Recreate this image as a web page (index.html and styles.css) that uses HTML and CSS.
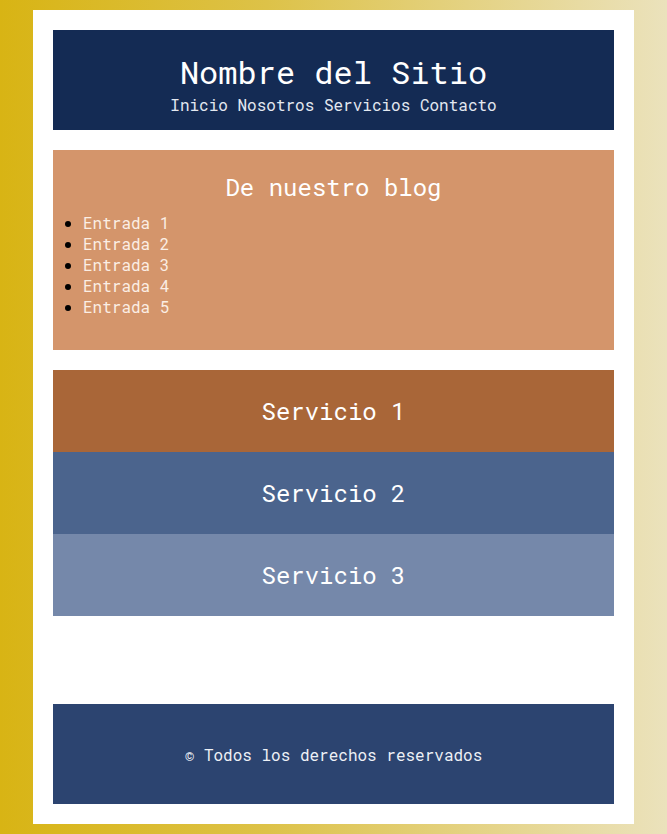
FILE: index.html
```html
<!DOCTYPE html>
<html lang="es">
<head>
<meta charset="utf-8">
<title>Nombre del Sitio</title>
<link rel="stylesheet" href="styles.css">
</head>
<body>
<div class="page">
  <header class="site-header">
    <h1 class="site-title">Nombre del Sitio</h1>
    <nav class="site-nav">
      <a href="#">Inicio</a>
      <a href="#">Nosotros</a>
      <a href="#">Servicios</a>
      <a href="#">Contacto</a>
    </nav>
  </header>
  <section class="blog">
    <h2 class="blog-title">De nuestro blog</h2>
    <ul class="blog-list">
      <li>Entrada 1</li>
      <li>Entrada 2</li>
      <li>Entrada 3</li>
      <li>Entrada 4</li>
      <li>Entrada 5</li>
    </ul>
  </section>
  <section class="services">
    <div class="service service-1">Servicio 1</div>
    <div class="service service-2">Servicio 2</div>
    <div class="service service-3">Servicio 3</div>
  </section>
  <footer class="site-footer">© Todos los derechos reservados</footer>
</div>
</body>
</html>
```
FILE: styles.css
```css
* { box-sizing: border-box; }

html, body {
  margin: 0;
  height: 100%;
}

body {
  background: linear-gradient(to right, #d8b414 0%, #ddc248 40%, #ebe2bc 100%);
  font-family: "Roboto Mono", "DejaVu Sans Mono", "Liberation Mono", monospace;
  padding: 10px 33px;
}

.page {
  background: #ffffff;
  min-height: 814px;
  padding: 20px;
  display: flex;
  flex-direction: column;
  gap: 20px;
}

.site-header {
  background: #142b54;
  height: 100px;
  display: flex;
  flex-direction: column;
  align-items: center;
  justify-content: center;
  color: #ffffff;
}

.site-title {
  margin: 0;
  font-size: 32px;
  font-weight: 400;
  line-height: 36px;
  padding-top: 8px;
}

.site-nav {
  margin-top: 5px;
  font-size: 16px;
  line-height: 19px;
  display: flex;
  gap: 9.6px;
}

.site-nav a {
  color: #e3e8f0;
  text-decoration: none;
}

.blog {
  background: #d4956b;
  height: 200px;
  padding: 21px 0 0 0;
}

.blog-title {
  margin: 0 0 9px;
  font-size: 24px;
  font-weight: 400;
  line-height: 32px;
  text-align: center;
  color: #ffffff;
}

.blog-list {
  margin: 0;
  padding-left: 30px;
  font-size: 16px;
  line-height: 21px;
  color: #fbeee4;
}

.blog-list li::marker {
  color: #000000;
}

.services {
  display: flex;
  flex-direction: column;
}

.service {
  height: 82px;
  display: flex;
  align-items: center;
  justify-content: center;
  font-size: 24px;
  color: #ffffff;
}

.service-1 { background: #a96638; }
.service-2 { background: #4b648d; }
.service-3 { background: #7588aa; }

.site-footer {
  margin-top: auto;
  background: #2c4470;
  height: 100px;
  display: flex;
  align-items: center;
  justify-content: center;
  font-size: 16px;
  color: #eef1f6;
}
```
